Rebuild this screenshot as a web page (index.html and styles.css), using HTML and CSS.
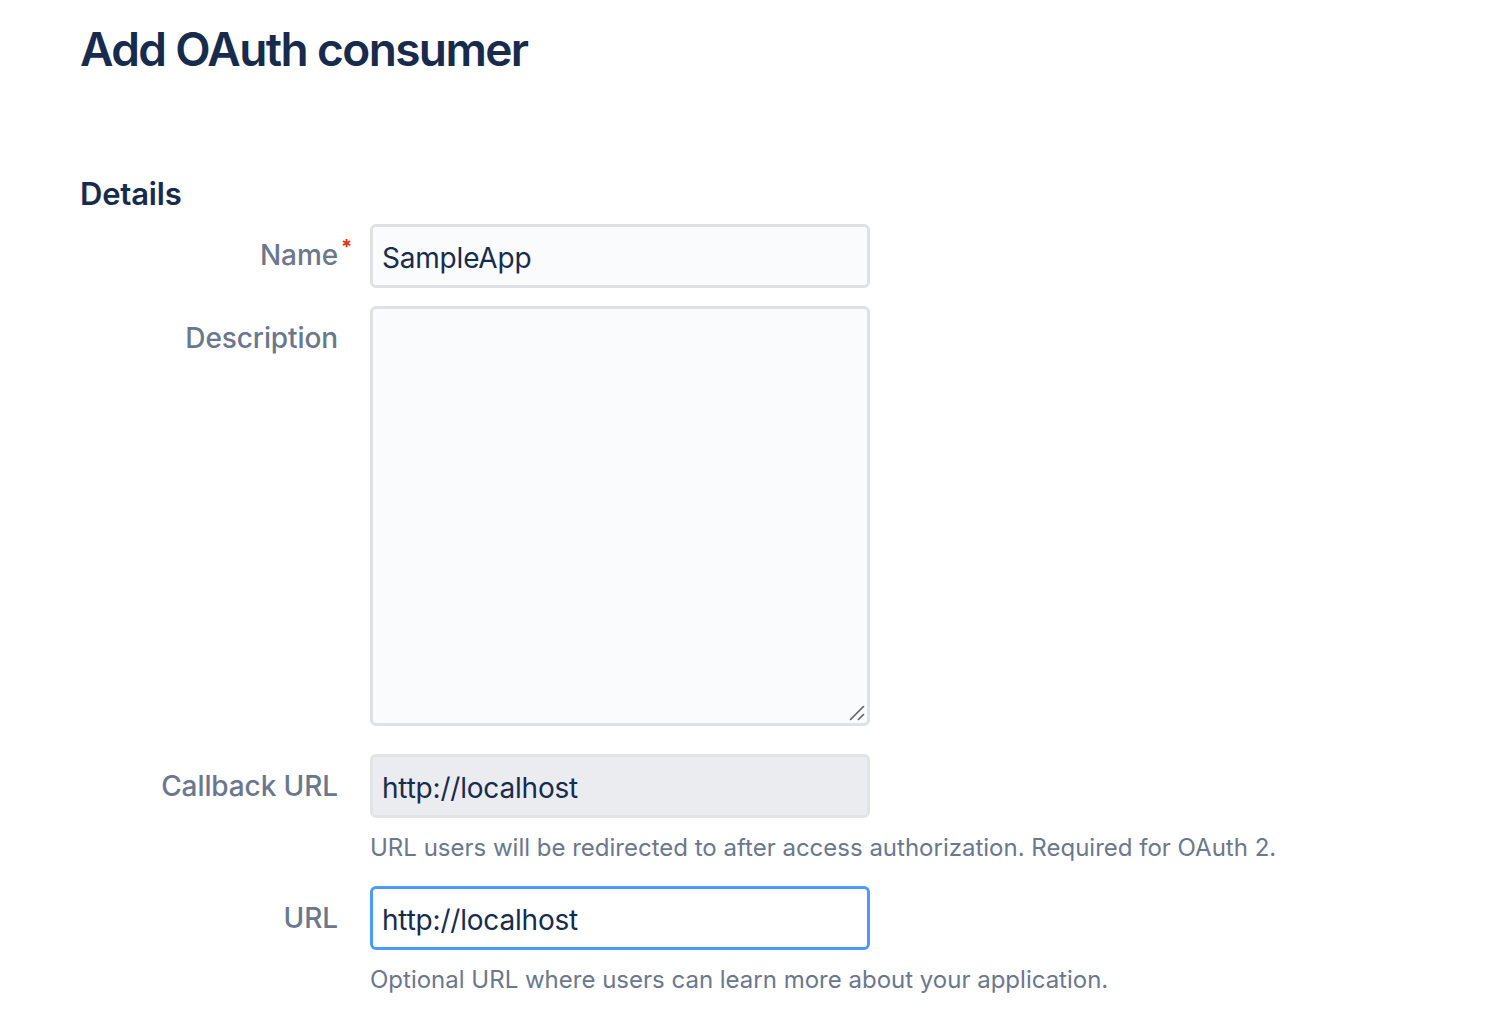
FILE: index.html
```html
<!DOCTYPE html>
<html lang="en">
<head>
<meta charset="utf-8">
<title>Add OAuth consumer</title>
<link rel="stylesheet" href="styles.css">
</head>
<body>
<main class="page">
  <h1 class="page-title">Add OAuth consumer</h1>
  <form class="form">
    <h3 class="section-title">Details</h3>
    <div class="field-group row-name">
      <label class="field-label" for="name">Name<span class="required">*</span></label>
      <input class="text-input" id="name" type="text" value="SampleApp">
    </div>
    <div class="field-group row-desc">
      <label class="field-label" for="desc">Description</label>
      <div class="area-wrap">
        <textarea class="text-area" id="desc"></textarea>
        <svg class="grip" width="16" height="16" viewBox="0 0 16 16" aria-hidden="true">
          <path d="M1.5 14.5 L14.5 1.5 M9.5 14.5 L14.5 9.5" stroke="#5e6066" stroke-width="1.6" stroke-linecap="round" fill="none"/>
        </svg>
      </div>
    </div>
    <div class="field-group row-callback">
      <label class="field-label" for="callback">Callback URL</label>
      <div class="field-body">
        <input class="text-input is-disabled" id="callback" type="text" value="http://localhost" disabled>
        <div class="help">URL users will be redirected to after access authorization. Required for OAuth 2.</div>
      </div>
    </div>
    <div class="field-group row-url">
      <label class="field-label" for="url">URL</label>
      <div class="field-body">
        <input class="text-input is-focused" id="url" type="text" value="http://localhost">
        <div class="help">Optional URL where users can learn more about your application.</div>
      </div>
    </div>
  </form>
</main>
</body>
</html>
```
FILE: styles.css
```css
html, body {
  margin: 0;
  padding: 0;
  background: #ffffff;
}
body {
  font-family: Inter, "Noto Sans", "Liberation Sans", sans-serif;
  color: #172b4d;
}
.page {
  padding: 19px 0 0 80px;
}
.page-title {
  margin: 0;
  font-size: 46px;
  line-height: 60px;
  font-weight: 600;
  letter-spacing: -1.6px;
  color: #172b4d;
}
.form {
  margin-top: 95px;
}
.section-title {
  margin: 0 0 10px 0;
  font-size: 31px;
  line-height: 40px;
  font-weight: 600;
  letter-spacing: -0.2px;
  color: #172b4d;
}
.field-group {
  display: grid;
  grid-template-columns: 258px 500px;
  column-gap: 32px;
  align-items: start;
}
.row-desc { margin-top: 18px; }
.row-callback { margin-top: 28px; }
.row-url { margin-top: 22px; }
.field-label {
  justify-self: end;
  position: relative;
  padding-top: 11px;
  font-size: 28px;
  line-height: 40px;
  font-weight: 500;
  letter-spacing: -0.1px;
  color: #6b778c;
}
.row-desc .field-label,
.row-callback .field-label,
.row-url .field-label { padding-top: 12px; }
.required {
  position: absolute;
  left: 100%;
  top: 13px;
  margin-left: 3px;
  font-size: 20px;
  line-height: 20px;
  font-weight: 700;
  color: #de350b;
}
.text-input {
  box-sizing: border-box;
  display: block;
  width: 500px;
  height: 64px;
  margin: 0;
  padding: 4px 9px 0 9px;
  border: 3px solid #dfe1e6;
  border-radius: 6px;
  background: #fafbfc;
  font-family: inherit;
  font-size: 28px;
  letter-spacing: -0.2px;
  color: #172b4d;
  outline: none;
}
.text-input.is-disabled {
  background: #ebecf0;
  border-color: #e2e4e8;
  color: #172b4d;
  -webkit-text-fill-color: #172b4d;
  opacity: 1;
}
.text-input.is-focused {
  background: #ffffff;
  border-color: #4c9aff;
}
.area-wrap {
  position: relative;
  width: 500px;
  height: 420px;
}
.text-area {
  box-sizing: border-box;
  display: block;
  width: 500px;
  height: 420px;
  margin: 0;
  padding: 10px;
  border: 3px solid #dfe1e6;
  border-radius: 6px;
  background: #fafbfc;
  font-family: inherit;
  font-size: 28px;
  color: #172b4d;
  outline: none;
  resize: none;
}
.grip {
  position: absolute;
  right: 5px;
  bottom: 5px;
}
.help {
  margin-top: 14px;
  width: 1000px;
  font-size: 24px;
  line-height: 32px;
  letter-spacing: 0;
  color: #6b778c;
}
```
